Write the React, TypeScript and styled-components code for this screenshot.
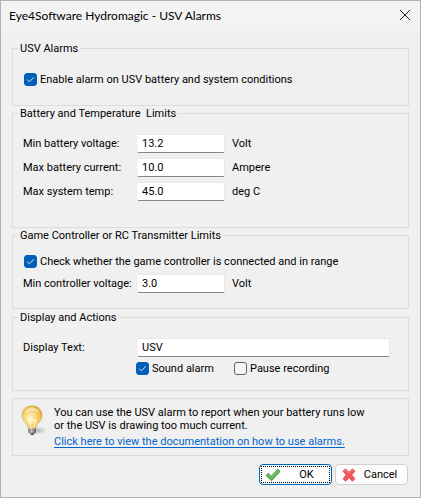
import React from "react";
import styled, { createGlobalStyle, css } from "styled-components";

const GlobalStyle = createGlobalStyle`
  *, *::before, *::after { box-sizing: border-box; }
  body { margin: 0; background: #f0f0f0; }
`;

const uiFont = css`
  font-family: Roboto, "Liberation Sans", sans-serif;
  font-size: 11px;
  line-height: 13px;
`;

const Dialog = styled.form`
  ${uiFont}
  display: flex;
  flex-direction: column;
  min-height: 100vh;
  border: 1px solid #b2b2b2;
  background: #f0f0f0;
  color: #000;
`;

const TitleBar = styled.header`
  display: flex;
  align-items: center;
  justify-content: space-between;
  height: 30px;
  padding: 0 8px;
  background: #f3f3f3;
`;

const Title = styled.h1`
  margin: 0;
  font: 400 12px/16px Lato, "Open Sans", sans-serif;
`;

const CloseButton = styled.button`
  display: flex;
  padding: 0 1px 2px;
  border: 0;
  background: none;
`;

const Body = styled.main`
  display: flex;
  flex-direction: column;
  padding: 10px 11px 0;
`;

const Group = styled.fieldset<{ $bottom: number; $after?: number }>`
  min-width: 0;
  margin: 0 0 ${(p) => p.$after ?? 0}px;
  padding: 0 18px ${(p) => p.$bottom}px 10px;
  border: 1px solid #dcdcdc;
`;

const Legend = styled.legend`
  margin-left: -5px;
  padding: 0 2px;
  line-height: 15px;
`;

const CheckLabel = styled.label`
  display: flex;
  align-items: center;
  gap: 3px;
  height: 13px;
  padding-left: 1px;
  white-space: nowrap;
`;

const CheckBox = styled.input.attrs({ type: "checkbox" })`
  appearance: none;
  flex: none;
  width: 13px;
  height: 13px;
  margin: 0;
  border: 1px solid #626262;
  border-radius: 3px;
  background: #f6f6f6;

  &:checked {
    border-color: #005fb8;
    background: #005fb8
      url("data:image/svg+xml,%3Csvg xmlns='http://www.w3.org/2000/svg' viewBox='0 0 11 11'%3E%3Cpath d='M2.2 5.6l2.2 2.2 4.4-4.4' fill='none' stroke='%23d8e8f6'/%3E%3C/svg%3E")
      center / 11px 11px no-repeat;
  }
`;

const Fields = styled.div<{ $top: number; $gap?: number }>`
  display: grid;
  gap: ${(p) => p.$gap ?? 5}px;
  padding-top: ${(p) => p.$top}px;
`;

const Row = styled.div<{ $wide?: boolean }>`
  display: grid;
  grid-template-columns: 114px ${(p) => (p.$wide ? "1fr" : "88px 1fr")};
  align-items: center;
  white-space: nowrap;
`;

const Unit = styled.span`
  padding-left: 7px;
`;

const TextBox = styled.input.attrs({ type: "text" })`
  ${uiFont}
  width: 100%;
  min-width: 0;
  height: 19px;
  padding: 0 4px;
  border: 1px solid #e8e8e8;
  border-left-color: #f6f6f6;
  border-bottom-color: #868686;
  border-radius: 2px;
  background: #fff;
  color: #000;
  outline: 0;
`;

const ActionRow = styled.div`
  display: grid;
  grid-template-columns: 98px 1fr;
  padding-left: 112px;
`;

const Hint = styled.section`
  display: flex;
  gap: 6px;
  min-height: 58px;
  margin-top: 7px;
  padding: 6px 8px;
  border: 1px solid #dcdcdc;
`;

const HintText = styled.p`
  margin: 0;
  padding-top: 1px;
`;

const HelpLink = styled.a`
  display: block;
  width: fit-content;
  margin-top: 3px;
  color: #0066cc;
  text-underline-offset: 2px;
`;

const Buttons = styled.footer`
  display: flex;
  justify-content: flex-end;
  gap: 3px;
  padding: 8px 1px 11px;
`;

const PushButton = styled.button<{ $primary?: boolean }>`
  ${uiFont}
  position: relative;
  display: grid;
  grid-template-columns: 16px 1fr;
  align-items: center;
  width: 73px;
  height: 21px;
  padding: 0 9px 0 5px;
  border: 1px solid ${(p) => (p.$primary ? "#0067b8" : "#d0d0d0")};
  border-radius: 4px;
  background: #fdfdfd;
  color: #000;
  text-align: center;

  &::after {
    content: "";
    display: ${(p) => (p.$primary ? "block" : "none")};
    position: absolute;
    inset: 1px;
    border: 1px dotted #000;
  }
`;

const Caption = styled.span<{ $inset: number }>`
  padding-left: ${(p) => p.$inset}px;
`;

const CloseIcon = () => (
  <svg width="12" height="12" viewBox="0 0 12 12" aria-hidden="true">
    <path d="M1 1l10 10M11 1L1 11" stroke="#1a1a1a" fill="none" />
  </svg>
);

const BulbIcon = () => (
  <svg width="27" height="33" viewBox="0 0 27 33" aria-hidden="true">
    <defs>
      <radialGradient id="glass" cx="0.42" cy="0.55" r="0.6">
        <stop offset="0" stopColor="#fff9dc" />
        <stop offset="0.4" stopColor="#fae08a" />
        <stop offset="0.8" stopColor="#efc04e" />
        <stop offset="1" stopColor="#d5a540" />
      </radialGradient>
      <linearGradient id="cap" x1="0" x2="1">
        <stop offset="0" stopColor="#707070" />
        <stop offset="0.4" stopColor="#e4e4e4" />
        <stop offset="1" stopColor="#555" />
      </linearGradient>
      <radialGradient id="shade">
        <stop offset="0" stopColor="#999" stopOpacity="0.7" />
        <stop offset="1" stopColor="#bbb" stopOpacity="0" />
      </radialGradient>
    </defs>
    <ellipse cx="17" cy="25.5" rx="10" ry="4.5" fill="url(#shade)" />
    <path
      d="M11 .8C5 .8 1 5 1 10.500c0 3.400 1.900 5.600 3.900 7.800 1.300 1.500 2 3 2.400 4.800 1.500 1.200 6 1.200 7.500 0 .3-1.900 1-3.300 2.300-4.800 2-2.200 3.900-4.400 3.900-7.800C21 5 17 .8 11 .8z"
      fill="url(#glass)"
      stroke="#dcae4c"
      strokeWidth="0.7"
    />
    <path d="M3.500 8.500C4.500 4.500 8 2.300 11.500 2.500c3.500.1 6 2 7 5-4-2-10-2-15 1z" fill="#fff" opacity="0.45" />
    <path d="M9.800 22.500l-1-8 2 1.300 1-1.800 1 1.800 2-1.300-1.500 8" fill="none" stroke="#fffdf0" strokeWidth="0.8" />
    <path d="M7.300 23.300h7.600v3.600c-.6 1.600-2.200 2.800-3.800 2.800s-3.200-1.200-3.800-2.800z" fill="url(#cap)" />
    <path d="M7.300 25l7.600.5M7.300 27l7.400.6" stroke="#666" strokeWidth="0.6" />
    <path d="M9.200 28.500h3.900l-1 1.600h-1.800z" fill="#333" />
  </svg>
);

const TickIcon = () => (
  <svg width="16" height="14" viewBox="0 0 16 14" aria-hidden="true">
    <path
      d="M1 7.500L3.300 5.300 6.300 8.200 12.700 1.300 15 3.400 6.500 12.700z"
      fill="#62b558"
      stroke="#3f8f3c"
      strokeWidth="0.9"
      strokeLinejoin="round"
    />
    <path d="M2.300 7.300l1-.9 3 2.900 6.500-6.800" fill="none" stroke="#a4dc98" strokeWidth="0.7" />
  </svg>
);

const CrossIcon = () => (
  <svg width="16" height="14" viewBox="0 0 16 14" aria-hidden="true">
    <path
      d="M2 3.200L4.600.9 8 4.300 11.300.9 14 3.200 10.700 6.900 14 10.700 11.400 13.200 8 9.700 4.600 13.200 2 10.700 5.300 6.900z"
      fill="#f2555a"
      stroke="#de3b40"
      strokeWidth="0.8"
      strokeLinejoin="round"
    />
    <path d="M3.200 3.200l1.400-1.200L8 5.500l3.300-3.500 1.400 1.200" fill="none" stroke="#ff9a9a" strokeWidth="0.7" />
  </svg>
);

type FieldProps = { id: string; label: string; value: string; unit?: string };

const Field = ({ id, label, value, unit }: FieldProps) => (
  <Row $wide={!unit}>
    <label htmlFor={id}>{label}</label>
    <TextBox id={id} defaultValue={value} />
    {unit && <Unit>{unit}</Unit>}
  </Row>
);

const Check = ({ label, checked }: { label: string; checked?: boolean }) => (
  <CheckLabel>
    <CheckBox defaultChecked={checked} />
    {label}
  </CheckLabel>
);

export default function App() {
  return (
    <>
      <GlobalStyle />
      <Dialog onSubmit={(e) => e.preventDefault()}>
        <TitleBar>
          <Title>Eye4Software Hydromagic - USV Alarms</Title>
          <CloseButton type="button" aria-label="Close">
            <CloseIcon />
          </CloseButton>
        </TitleBar>
        <Body>
          <Group $bottom={19}>
            <Legend>USV Alarms</Legend>
            <Fields $top={17}>
              <Check label="Enable alarm on USV battery and system conditions" checked />
            </Fields>
          </Group>
          <Group $bottom={26}>
            <Legend>Battery and Temperature&nbsp; Limits</Legend>
            <Fields $top={13}>
              <Field id="min-voltage" label="Min battery voltage:" value="13.2" unit="Volt" />
              <Field id="max-current" label="Max battery current:" value="10.0" unit="Ampere" />
              <Field id="max-temp" label="Max system temp:" value="45.0" unit="deg C" />
            </Fields>
          </Group>
          <Group $bottom={15} $after={1}>
            <Legend>Game Controller or RC Transmitter Limits</Legend>
            <Fields $top={12} $gap={6}>
              <Check label="Check whether the game controller is connected and in range" checked />
              <Field id="controller-voltage" label="Min controller voltage:" value="3.0" unit="Volt" />
            </Fields>
          </Group>
          <Group $bottom={15}>
            <Legend>Display and Actions</Legend>
            <Fields $top={13}>
              <Field id="display-text" label="Display Text:" value="USV" />
              <ActionRow>
                <Check label="Sound alarm" checked />
                <Check label="Pause recording" />
              </ActionRow>
            </Fields>
          </Group>
          <Hint>
            <BulbIcon />
            <HintText>
              You can use the USV alarm to report when your battery runs low
              <br />
              or the USV is drawing too much current.
              <HelpLink href="#alarms">Click here to view the documentation on how to use alarms.</HelpLink>
            </HintText>
          </Hint>
          <Buttons>
            <PushButton type="submit" $primary>
              <TickIcon />
              <Caption $inset={10}>OK</Caption>
            </PushButton>
            <PushButton type="button">
              <CrossIcon />
              <Caption $inset={6}>Cancel</Caption>
            </PushButton>
          </Buttons>
        </Body>
      </Dialog>
    </>
  );
}
